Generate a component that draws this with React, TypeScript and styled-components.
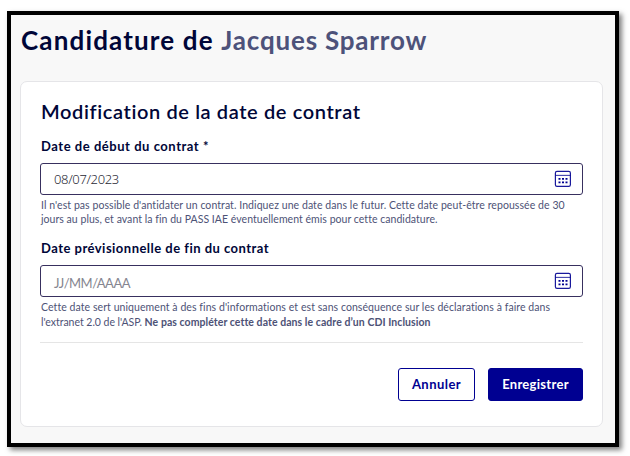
import React from "react";
import styled, { createGlobalStyle } from "styled-components";

const GlobalStyle = createGlobalStyle`
  * { box-sizing: border-box; }
  body {
    margin: 0;
    min-height: 456px;
    display: flow-root;
    background: #fff;
    font-family: Lato, "Noto Sans", sans-serif;
    color: #000638;
  }
`;

const Page = styled.main`
  width: 612px;
  height: 436px;
  margin: 11px 0 0 7px;
  border: 4px solid #000;
  background: #f8f8f8;
  box-shadow: 3px 3px 5px rgba(0, 0, 0, 0.5);
`;

const Title = styled.h1`
  margin: 0;
  padding: 9px 0 0 10px;
  height: 66px;
  font-size: 26px;
  line-height: 32px;
  font-weight: 700;
  letter-spacing: 1.15px;
  white-space: nowrap;
`;

const Muted = styled.span`
  color: #4d527a;
  letter-spacing: 0.8px;
`;

const Card = styled.form`
  width: 583px;
  height: 346px;
  margin-left: 9px;
  padding: 16px 19px 0;
  border: 1px solid #e5e5e8;
  border-radius: 7px;
  background: #fff;
`;

const Subtitle = styled.h2`
  margin: 0 0 11px 1px;
  font-size: 20px;
  line-height: 26px;
  font-weight: 600;
  letter-spacing: 0.61px;
  white-space: nowrap;
`;

const Field = styled.div<{ $height: number }>`
  display: flex;
  flex-direction: column;
  height: ${(p) => p.$height}px;
`;

const Label = styled.label<{ $spacing: number }>`
  height: 28px;
  padding: 3px 0 0 1px;
  font-size: 13px;
  line-height: 16px;
  font-weight: 700;
  letter-spacing: ${(p) => p.$spacing}px;
  white-space: nowrap;
`;

const InputBox = styled.div`
  display: flex;
  align-items: center;
  justify-content: space-between;
  flex: none;
  height: 32px;
  padding: 0 10px 0 13px;
  border: 1px solid #38305f;
  border-radius: 3px;
`;

const Value = styled.span<{ $placeholder?: boolean }>`
  padding-top: ${(p) => (p.$placeholder ? 3 : 0)}px;
  font-family: ${(p) => (p.$placeholder ? "Lato" : '"Noto Sans"')}, sans-serif;
  font-weight: ${(p) => (p.$placeholder ? 400 : 300)};
  font-size: 13px;
  letter-spacing: ${(p) => (p.$placeholder ? -0.5 : -0.35)}px;
  color: ${(p) => (p.$placeholder ? "#858590" : "#282834")};
`;

const Help = styled.div<{ $leading: number }>`
  padding: 3px 0 0 1px;
  font-size: 10.5px;
  line-height: ${(p) => p.$leading}px;
  color: #4d5276;
`;

const Line = styled.div<{ $spacing: number }>`
  letter-spacing: ${(p) => p.$spacing}px;
  white-space: nowrap;
`;

const Strong = styled.b`
  letter-spacing: 0.06px;
`;

const Actions = styled.div`
  display: flex;
  justify-content: flex-end;
  gap: 13px;
  padding-top: 25px;
  border-top: 1px solid #e5e5e5;
`;

const Button = styled.button<{ $primary?: boolean }>`
  width: ${(p) => (p.$primary ? 95 : 77)}px;
  height: 33px;
  padding: 0 0 1px;
  border: 1px solid #000091;
  border-radius: 3px;
  background: ${(p) => (p.$primary ? "#000091" : "#fff")};
  color: ${(p) => (p.$primary ? "#fff" : "#000091")};
  font: 700 13px Lato, sans-serif;
  letter-spacing: ${(p) => (p.$primary ? 0.3 : 0.45)}px;
`;

const CalendarIcon = () => (
  <svg width="18" height="18" viewBox="0 0 18 18" fill="none">
    <rect x="1.4" y="1.4" width="15" height="15" rx="1.6" stroke="#000091" strokeOpacity=".9" strokeWidth="1.2" />
    <path d="M1.5 5.4h15" stroke="#000091" strokeOpacity=".75" strokeWidth="1.1" />
    <path
      d="M4.5 8h2v1.7h-2zM8 8h2v1.7H8zM11.5 8h2v1.7h-2zM4.5 11.6h2v1.7h-2zM8 11.6h2v1.7H8zM11.5 11.6h2v1.7h-2z"
      fill="#000091"
    />
  </svg>
);

export default function App() {
  return (
    <>
      <GlobalStyle />
      <Page>
        <Title>
          Candidature de <Muted>Jacques Sparrow</Muted>
        </Title>
        <Card>
          <Subtitle>Modification de la date de contrat</Subtitle>
          <Field $height={102}>
            <Label $spacing={0.54}>Date de début du contrat *</Label>
            <InputBox>
              <Value>08/07/2023</Value>
              <CalendarIcon />
            </InputBox>
            <Help $leading={14}>
              <Line $spacing={0.07}>
                Il n'est pas possible d'antidater un contrat. Indiquez une date dans le futur. Cette date peut-être repoussée de 30
              </Line>
              <Line $spacing={0.04}>jours au plus, et avant la fin du PASS IAE éventuellement émis pour cette candidature.</Line>
            </Help>
          </Field>
          <Field $height={105}>
            <Label $spacing={0.48}>Date prévisionnelle de fin du contrat</Label>
            <InputBox>
              <Value $placeholder>JJ/MM/AAAA</Value>
              <CalendarIcon />
            </InputBox>
            <Help $leading={15}>
              <Line $spacing={0.07}>
                Cette date sert uniquement à des fins d'informations et est sans conséquence sur les déclarations à faire dans
              </Line>
              <Line $spacing={-0.03}>
                l'extranet 2.0 de l'ASP. <Strong>Ne pas compléter cette date dans le cadre d’un CDI Inclusion</Strong>
              </Line>
            </Help>
          </Field>
          <Actions>
            <Button type="button">Annuler</Button>
            <Button type="button" $primary>
              Enregistrer
            </Button>
          </Actions>
        </Card>
      </Page>
    </>
  );
}
